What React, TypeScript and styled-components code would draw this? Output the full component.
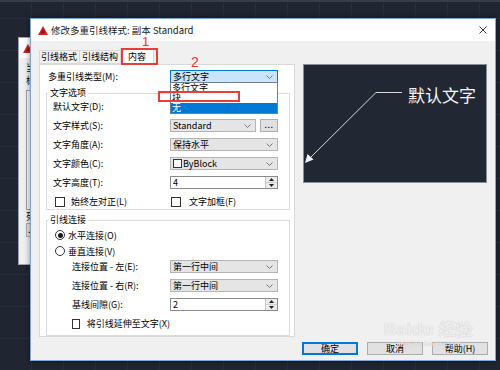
import React from 'react';
import styled, { createGlobalStyle } from 'styled-components';

const Global = createGlobalStyle`
  html, body { margin: 0; padding: 0; }
  body { width: 500px; height: 370px; overflow: hidden; background: #1e2430; }
  #root { width: 500px; height: 370px; }
`;

const FONT = `"Noto Sans CJK SC", "Noto Sans", sans-serif`;

const Desktop = styled.div`
  position: relative;
  width: 500px;
  height: 370px;
  overflow: hidden;
  font-family: ${FONT};
  background-color: #1f2531;
  background-image:
    linear-gradient(#353c4a, #353c4a),
    repeating-linear-gradient(90deg, transparent 0 31px, rgba(255,255,255,0.045) 31px 32px),
    repeating-linear-gradient(0deg, transparent 0 31px, rgba(255,255,255,0.045) 31px 32px);
  background-size: 100% 2px, auto, auto;
  background-repeat: no-repeat, repeat, repeat;
`;

/* ---------- back window ---------- */
const BackWindow = styled.div`
  position: absolute;
  left: 18px;
  top: 37px;
  width: 60px;
  height: 228px;
  box-sizing: border-box;
  border: 1px solid #9aa4b0;
  background: #f0f0f0;
  display: flex;
  flex-direction: column;
`;
const BackTitle = styled.div`
  height: 20px;
  background: #fff;
  display: flex;
  align-items: center;
  padding-left: 4px;
`;
const BackBody = styled.div`
  display: flex;
  flex-direction: column;
  padding: 3px 0 0 7px;
  font-size: 9px;
  line-height: 13px;
  color: #000;
`;
const BackList = styled.div`
  margin-top: 3px;
  height: 118px;
  border: 1px solid #a0a0a0;
  background: #fbfbfb;
`;
const BackCombo = styled.div`
  height: 12px;
  border: 1px solid #adadad;
  background: #e5e5e5;
  font-size: 9px;
  line-height: 12px;
  padding-left: 1px;
`;

/* ---------- main dialog ---------- */
const Dialog = styled.div`
  position: absolute;
  left: 30px;
  top: 18px;
  width: 466px;
  box-sizing: border-box;
  border: 1px solid #7ea6d6;
  background: #f0f0f0;
  box-shadow: 0 0 6px rgba(0, 0, 0, 0.45);
  display: flex;
  flex-direction: column;
`;
const TitleBar = styled.div`
  height: 22px;
  background: #fff;
  display: flex;
  align-items: center;
  padding: 0 8px 0 7px;
  gap: 3px;
`;
const TitleText = styled.span`
  flex: 1;
  font-size: 9.5px;
  color: #1a1a1a;
  white-space: nowrap;
`;
const Body = styled.div`
  display: flex;
  flex-direction: column;
  padding: 7px 7px 5px 8px;
`;
const MainGrid = styled.div`
  display: grid;
  grid-template-columns: 256px 184px;
  column-gap: 8px;
  align-items: start;
`;
const LeftCol = styled.div`
  display: flex;
  flex-direction: column;
`;
const TabRow = styled.div`
  display: flex;
  align-items: flex-end;
  height: 16px;
`;
const Tab = styled.div<{ $active?: boolean }>`
  position: relative;
  z-index: ${p => (p.$active ? 2 : 1)};
  box-sizing: border-box;
  height: ${p => (p.$active ? 17 : 14)}px;
  margin-bottom: ${p => (p.$active ? -1 : 0)}px;
  margin-left: -1px;
  padding: 0 ${p => (p.$active ? 7 : 2)}px;
  border: 1px solid #d9d9d9;
  border-bottom: ${p => (p.$active ? 'none' : '1px solid #d9d9d9')};
  background: ${p => (p.$active ? '#fff' : '#f0f0f0')};
  font-size: 9px;
  line-height: ${p => (p.$active ? 15 : 12)}px;
  color: #000;
  white-space: nowrap;
  &:first-child { margin-left: 0; padding-left: 1px; }
`;
const Panel = styled.div`
  position: relative;
  z-index: 1;
  box-sizing: border-box;
  width: 256px;
  background: #fff;
  border: 1px solid #d9d9d9;
  padding: 5px 4px 0 6px;
  display: flex;
  flex-direction: column;
`;
const FormRow = styled.div<{ $label: number }>`
  display: grid;
  grid-template-columns: ${p => p.$label}px 108px;
  align-items: center;
  height: 13px;
`;
const TypeRow = styled(FormRow)`
  padding-left: 2px;
`;
const Label = styled.span`
  font-size: 9px;
  line-height: 11px;
  color: #000;
  white-space: nowrap;
`;
const Group = styled.fieldset<{ $top: number }>`
  margin: ${p => p.$top}px 0 0 0;
  padding: 0;
  min-width: 0;
  border: 1px solid #dcdcdc;
`;
const Legend = styled.legend`
  margin-left: 1px;
  padding: 0 2px;
  font-size: 9px;
  line-height: 10px;
  color: #000;
`;
const GroupBody = styled.div<{ $bottom: number; $gap: number }>`
  display: flex;
  flex-direction: column;
  gap: ${p => p.$gap}px;
  padding: 2px 0 ${p => p.$bottom}px 6px;
`;
const Indent = styled.div`
  display: flex;
  flex-direction: column;
  gap: 6px;
  margin-top: 1px;
  padding-left: 19px;
`;
const Cell = styled.div`
  display: flex;
  gap: 4px;
  align-items: center;
`;
const ComboBox = styled.div<{ $focus?: boolean; $w?: number }>`
  position: relative;
  display: flex;
  align-items: center;
  justify-content: space-between;
  box-sizing: border-box;
  height: 13px;
  width: ${p => p.$w ?? 108}px;
  padding: 0 4px 0 2px;
  background: ${p => (p.$focus ? '#cce4f7' : '#e5e5e5')};
  border: 1px solid ${p => (p.$focus ? '#0078d7' : '#b4b4b4')};
  font-size: 9px;
  line-height: 11px;
  color: #000;
  white-space: nowrap;
`;
const ComboText = styled.span`
  display: flex;
  align-items: center;
  gap: 1px;
`;
const ColorSwatch = styled.span`
  display: inline-block;
  width: 7px;
  height: 7px;
  border: 1px solid #333;
  background: #fff;
`;
const TextBox = styled.div<{ $w?: number }>`
  position: relative;
  display: flex;
  align-items: center;
  box-sizing: border-box;
  height: 13px;
  width: ${p => p.$w ?? 108}px;
  padding-left: 2px;
  background: #fff;
  border: 1px solid #8c8c8c;
  font-size: 9px;
  line-height: 11px;
`;
const SpinText = styled.span`
  flex: 1;
`;
const SpinButtons = styled.div`
  align-self: stretch;
  width: 11px;
  display: flex;
  flex-direction: column;
  border-left: 1px solid #c8c8c8;
  background: #ececec;
`;
const SpinHalf = styled.div`
  flex: 1;
  display: flex;
  align-items: center;
  justify-content: center;
  & + & { border-top: 1px solid #d0d0d0; }
`;
const DotsButton = styled.div`
  box-sizing: border-box;
  width: 18px;
  height: 13px;
  border: 1px solid #adadad;
  background: #e1e1e1;
  font-size: 9px;
  line-height: 9px;
  text-align: center;
  letter-spacing: 0.5px;
`;
const DropList = styled.ul`
  position: absolute;
  left: -1px;
  top: 11px;
  z-index: 5;
  box-sizing: border-box;
  width: 108px;
  margin: 0;
  padding: 0;
  list-style: none;
  background: #fff;
  border: 1px solid #6f7f95;
`;
const DropItem = styled.li<{ $sel?: boolean }>`
  position: relative;
  height: 10px;
  line-height: 10px;
  padding-left: 1px;
  font-size: 9px;
  background: ${p => (p.$sel ? '#0078d7' : '#fff')};
  color: ${p => (p.$sel ? '#fff' : '#000')};
`;
const AnnotBox = styled.div<{ $l: number; $t: number; $w: number; $h: number }>`
  position: absolute;
  left: ${p => p.$l}px;
  top: ${p => p.$t}px;
  width: ${p => p.$w}px;
  height: ${p => p.$h}px;
  box-sizing: border-box;
  border: 2px solid #ea3d37;
  pointer-events: none;
`;
const AnnotNum = styled.span<{ $l: number; $t: number; $s: number }>`
  position: absolute;
  left: ${p => p.$l}px;
  top: ${p => p.$t}px;
  font-family: "Liberation Sans", Arial, sans-serif;
  font-size: ${p => p.$s}px;
  line-height: 1;
  color: #e8372f;
`;
const CheckLabel = styled.label<{ $gap: number }>`
  display: flex;
  align-items: center;
  gap: ${p => p.$gap}px;
  font-size: 9px;
  line-height: 11px;
  color: #000;
  white-space: nowrap;
`;
const CheckBox = styled.span<{ $ml: number }>`
  box-sizing: border-box;
  width: 10px;
  height: 10px;
  margin-left: ${p => p.$ml}px;
  border: 1px solid #333;
  background: #fff;
`;
const RadioRow = styled.label`
  display: flex;
  align-items: center;
  gap: 3px;
  height: 16px;
  font-size: 9px;
  line-height: 11px;
  color: #000;
`;
const Radio = styled.span<{ $on?: boolean }>`
  position: relative;
  box-sizing: border-box;
  width: 10px;
  height: 10px;
  margin-left: 2px;
  border-radius: 50%;
  border: 1px solid #333;
  background: #fff;
  display: flex;
  align-items: center;
  justify-content: center;
  &::after {
    content: '';
    display: ${p => (p.$on ? 'block' : 'none')};
    width: 5px;
    height: 5px;
    border-radius: 50%;
    background: #1a1a1a;
  }
`;
const RightCol = styled.div`
  margin-top: 16px;
`;
const Preview = styled.div`
  box-sizing: border-box;
  width: 184px;
  height: 119px;
  background: #222833;
  border: 1px solid #8a8f97;
  display: block;
`;
const Footer = styled.div`
  display: flex;
  justify-content: flex-end;
  gap: 9px;
  margin-top: 5px;
`;
const Button = styled.div<{ $default?: boolean }>`
  box-sizing: border-box;
  width: 56px;
  height: 13px;
  background: #e1e1e1;
  border: 1px solid ${p => (p.$default ? '#0078d7' : '#adadad')};
  box-shadow: ${p => (p.$default ? 'inset 0 0 0 1px #0078d7' : 'none')};
  font-size: 9px;
  line-height: 11px;
  text-align: center;
  color: #000;
`;
const Watermark = styled.div`
  position: absolute;
  left: 384px;
  top: 321px;
  display: flex;
  flex-direction: column;
  align-items: center;
  color: rgba(255, 255, 255, 0.75);
  text-shadow: 0 0 1px rgba(0, 0, 0, 0.25);
  pointer-events: none;
`;
const WmBig = styled.span`
  font-family: "Liberation Sans", Arial, sans-serif;
  font-weight: bold;
  font-size: 17px;
  line-height: 18px;
  letter-spacing: 0.5px;
`;
const WmSmall = styled.span`
  font-family: "Liberation Sans", Arial, sans-serif;
  font-size: 8px;
  line-height: 9px;
`;

const CadIcon = () => (
  <svg width="10" height="9" viewBox="0 0 10 9">
    <path d="M5 0 L10 9 L0 9 Z" fill="#d3201b" />
    <path d="M5 3.2 L7 7 L3 7 Z" fill="#8e120f" />
  </svg>
);

const CloseX = () => (
  <svg width="8" height="8" viewBox="0 0 8 8">
    <path d="M0.5 0.5 L7.5 7.5 M7.5 0.5 L0.5 7.5" stroke="#3c3c3c" strokeWidth="1" />
  </svg>
);

const Chevron = () => (
  <svg width="7" height="4" viewBox="0 0 7 4">
    <polyline points="0.5,0.5 3.5,3.5 6.5,0.5" fill="none" stroke="#777" strokeWidth="1" />
  </svg>
);

const Up = () => (
  <svg width="5" height="3" viewBox="0 0 5 3"><path d="M2.5 0 L5 3 L0 3 Z" fill="#222" /></svg>
);
const Down = () => (
  <svg width="5" height="3" viewBox="0 0 5 3"><path d="M0 0 L5 0 L2.5 3 Z" fill="#222" /></svg>
);

const Combo: React.FC<{ w?: number; focus?: boolean; children?: React.ReactNode }> = ({ w, focus, children }) => (
  <ComboBox $w={w} $focus={focus}>
    <ComboText>{children}</ComboText>
    <Chevron />
  </ComboBox>
);

const Spinner: React.FC<{ value: string }> = ({ value }) => (
  <TextBox>
    <SpinText>{value}</SpinText>
    <SpinButtons>
      <SpinHalf><Up /></SpinHalf>
      <SpinHalf><Down /></SpinHalf>
    </SpinButtons>
  </TextBox>
);

const PreviewDrawing = () => (
  <svg width="182" height="117" viewBox="0 0 182 117">
    <line x1="72" y1="27.5" x2="98" y2="27.5" stroke="#d8d8d8" strokeWidth="1" />
    <line x1="72" y1="27.5" x2="6" y2="93" stroke="#d8d8d8" strokeWidth="1" />
    <path d="M1 98 L3.5 89 L9.5 94.5 Z" fill="#f2f2f2" />
    <text
      x="104"
      y="29"
      fill="#f4f4f4"
      fontSize="17"
      dominantBaseline="central"
      fontFamily={`"Noto Sans CJK SC", sans-serif`}
    >
      默认文字
    </text>
  </svg>
);

export default function App() {
  return (
    <Desktop>
      <Global />
      <BackWindow>
        <BackTitle><CadIcon /></BackTitle>
        <BackBody>
          <span>当</span>
          <span>标</span>
          <BackList />
          <span>列</span>
          <BackCombo>J</BackCombo>
        </BackBody>
      </BackWindow>

      <Dialog>
        <TitleBar>
          <CadIcon />
          <TitleText>修改多重引线样式: 副本 Standard</TitleText>
          <CloseX />
        </TitleBar>
        <Body>
          <MainGrid>
            <LeftCol>
              <TabRow>
                <Tab>引线格式</Tab>
                <Tab>引线结构</Tab>
                <Tab $active>
                  内容
                  <AnnotBox $l={0} $t={-1} $w={37} $h={17} />
                  <AnnotNum $l={21} $t={-14} $s={13}>1</AnnotNum>
                </Tab>
              </TabRow>
              <Panel>
                <TypeRow $label={122}>
                  <Label>多重引线类型(M):</Label>
                  <ComboBox $focus>
                    <ComboText>多行文字</ComboText>
                    <Chevron />
                    <AnnotNum $l={20} $t={-16} $s={14}>2</AnnotNum>
                    <DropList>
                      <DropItem>多行文字</DropItem>
                      <DropItem>
                        块
                        <AnnotBox $l={-13} $t={-2} $w={82} $h={11} />
                      </DropItem>
                      <DropItem $sel>无</DropItem>
                    </DropList>
                  </ComboBox>
                </TypeRow>

                <Group $top={5}>
                  <Legend>文字选项</Legend>
                  <GroupBody $bottom={1} $gap={6}>
                    <FormRow $label={117}>
                      <Label>默认文字(D):</Label>
                      <Cell>
                        <TextBox $w={86} />
                        <DotsButton>...</DotsButton>
                      </Cell>
                    </FormRow>
                    <FormRow $label={117}>
                      <Label>文字样式(S):</Label>
                      <Cell>
                        <Combo w={86}>Standard</Combo>
                        <DotsButton>...</DotsButton>
                      </Cell>
                    </FormRow>
                    <FormRow $label={117}>
                      <Label>文字角度(A):</Label>
                      <Combo>保持水平</Combo>
                    </FormRow>
                    <FormRow $label={117}>
                      <Label>文字颜色(C):</Label>
                      <Combo><ColorSwatch />ByBlock</Combo>
                    </FormRow>
                    <FormRow $label={117}>
                      <Label>文字高度(T):</Label>
                      <Spinner value="4" />
                    </FormRow>
                    <FormRow $label={117}>
                      <CheckLabel $gap={6}><CheckBox $ml={2} />始终左对正(L)</CheckLabel>
                      <CheckLabel $gap={8}><CheckBox $ml={1} />文字加框(F)</CheckLabel>
                    </FormRow>
                  </GroupBody>
                </Group>

                <Group $top={5}>
                  <Legend>引线连接</Legend>
                  <GroupBody $bottom={5} $gap={0}>
                    <RadioRow><Radio $on />水平连接(O)</RadioRow>
                    <RadioRow><Radio />垂直连接(V)</RadioRow>
                    <Indent>
                      <FormRow $label={98}>
                        <Label>连接位置 - 左(E):</Label>
                        <Combo>第一行中间</Combo>
                      </FormRow>
                      <FormRow $label={98}>
                        <Label>连接位置 - 右(R):</Label>
                        <Combo>第一行中间</Combo>
                      </FormRow>
                      <FormRow $label={98}>
                        <Label>基线间隙(G):</Label>
                        <Spinner value="2" />
                      </FormRow>
                      <FormRow $label={98}>
                        <CheckLabel $gap={7}><CheckBox $ml={0} />将引线延伸至文字(X)</CheckLabel>
                      </FormRow>
                    </Indent>
                  </GroupBody>
                </Group>
              </Panel>
            </LeftCol>
            <RightCol>
              <Preview>
                <PreviewDrawing />
              </Preview>
            </RightCol>
          </MainGrid>
          <Footer>
            <Button $default>确定</Button>
            <Button>取消</Button>
            <Button>帮助(H)</Button>
          </Footer>
        </Body>
      </Dialog>

      <Watermark>
        <WmBig>Baidu 经验</WmBig>
        <WmSmall>jingyan.baidu.com</WmSmall>
      </Watermark>
    </Desktop>
  );
}
